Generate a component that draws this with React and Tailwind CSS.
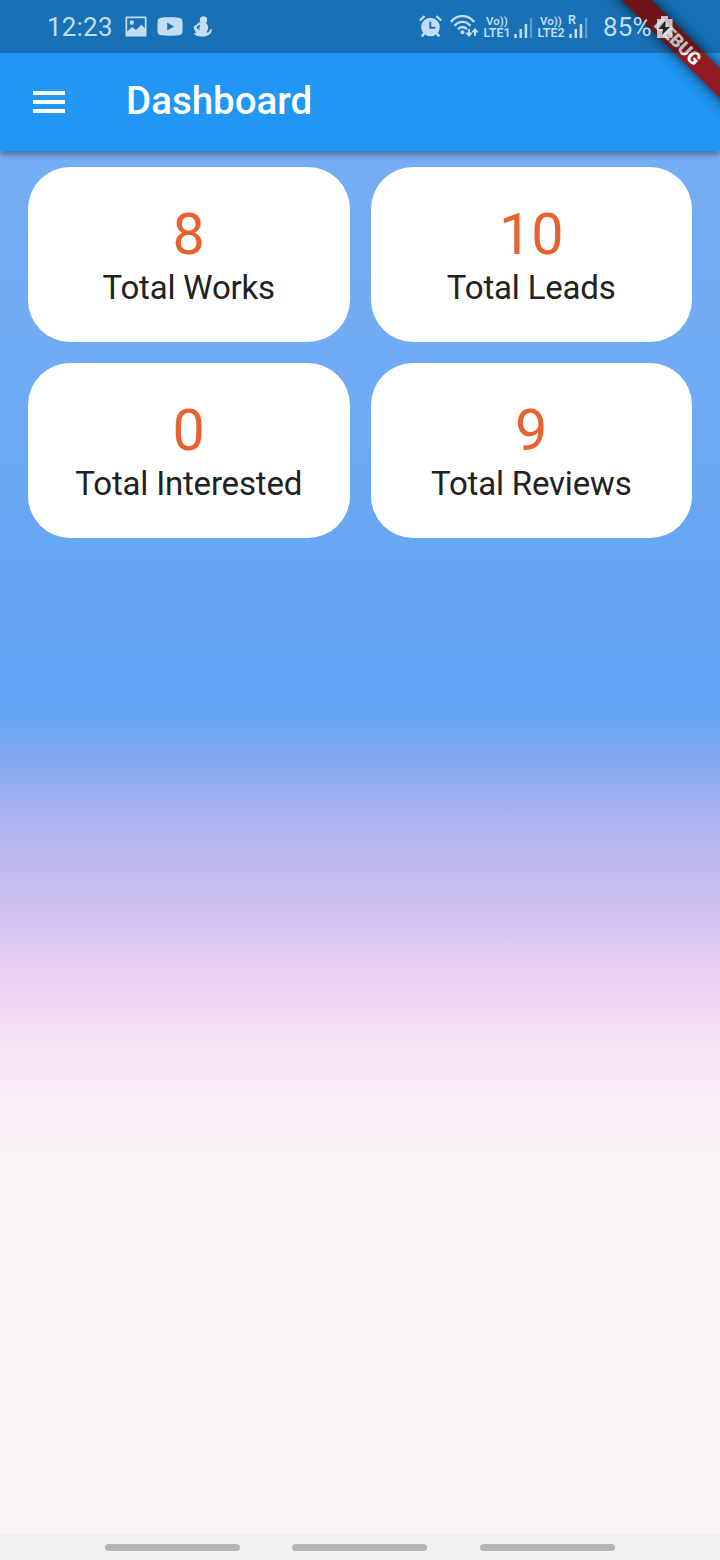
const stats = [
  { value: "8", label: "Total Works" },
  { value: "10", label: "Total Leads" },
  { value: "0", label: "Total Interested" },
  { value: "9", label: "Total Reviews" },
];

function PictureIcon() {
  return (
    <svg className="block h-[21px] w-[22px]" viewBox="0 0 22 21" fill="currentColor">
      <path fillRule="evenodd" d="M1.5 0.5h19a1 1 0 0 1 1 1v18a1 1 0 0 1-1 1h-19a1 1 0 0 1-1-1v-18a1 1 0 0 1 1-1zM2.2 2.2v13.3l4.8-4.6 4 3.2 5.5-5.3 3.3 3.4V2.2z" />
      <circle cx="6.8" cy="6.5" r="2.2" />
    </svg>
  );
}

function VideoIcon() {
  return (
    <svg className="block h-[19px] w-[26px]" viewBox="0 0 26 19" fill="currentColor">
      <path fillRule="evenodd" d="M4 .7C9 .1 17 .1 22 .7c2.2.3 3.2 1.4 3.4 3.5.3 3.5.3 7.1 0 10.6-.2 2.1-1.2 3.2-3.4 3.5-5 .6-13 .6-18 0C1.8 18 .8 16.9.6 14.8.3 11.3.3 7.7.6 4.2.8 2.1 1.800 1 4 .7zM10.200 5.500v8l6.800-4z" />
    </svg>
  );
}

function FigureIcon() {
  return (
    <svg className="block h-[21px] w-[20px]" viewBox="0 0 20 21" fill="currentColor">
      <circle cx="10.5" cy="3.9" r="3.7" />
      <path d="M7.800 6 12 6.500c3.300 2 3.600 4.500 2.800 7l-1.200 3c2 .3 3.200-1 3.900-3.500l1.500.4C18.400 17.200 16 20.500 9.500 20.500c-5 0-8.300-1.500-8.600-3l2.300-.8L.8 12.500l-.1-1.900 6-4.300.9 1.500-4.200 3.300 1.500 2.700z" />
      <path d="m6.800 9.600-1.200 2.500 1.200 2" stroke="#1c70b7" strokeWidth="1" fill="none" />
    </svg>
  );
}

function AlarmIcon() {
  return (
    <svg className="block h-[23px] w-[23px]" viewBox="0 0 23 23" fill="none" stroke="currentColor">
      <circle cx="11.5" cy="12" r="9.300" fill="currentColor" stroke="none" />
      <path d="M.9 5.500 5.600 1M17.400 1l4.700 4.500" strokeWidth="2.200" />
      <path d="m5.500 18-2.700 3.500M17.500 18l2.700 3.500" strokeWidth="2.600" />
      <path d="M11.300 6.500v6.200h5" stroke="#1c70b7" strokeWidth="2" />
    </svg>
  );
}

function WifiIcon() {
  return (
    <svg className="block h-[23px] w-[29px]" viewBox="0 0 29 23" fill="none" stroke="currentColor">
      <path d="M.8 7C7.300-.8 17.700-.8 24.200 7M4.500 10.700c4.600-5.100 11.400-5.100 16 0M8 14.200c2.500-2.900 6.500-2.900 9 0" strokeWidth="2.400" />
      <circle cx="12.5" cy="17.200" r="2" fill="currentColor" stroke="none" />
      <path d="M19 14v6.500M16.400 17.700l2.600 2.900 2.600-2.900M25 21v-6.500M22.400 17.300l2.600-2.900 2.600 2.900" strokeWidth="1.900" />
    </svg>
  );
}

function SignalIcon() {
  return (
    <svg className="block h-[20px] w-[19px]" viewBox="0 0 19 20" fill="currentColor">
      <path d="M.3 16h2.500v4H.3zM5.500 11h2.500v9H5.500zM10.700 6h2.500v14h-2.500z" />
      <path d="M16 0h2.200v20H16z" opacity=".4" />
    </svg>
  );
}

function Lte({ name }) {
  return (
    <div className="flex flex-col items-center font-semibold leading-none whitespace-nowrap">
      <span className="text-[11.5px] leading-[12px]">Vo))</span>
      <span className="text-[12.5px] leading-[12px]">{name}</span>
    </div>
  );
}

function StatusBar() {
  return (
    <div className="relative z-30 flex h-[53px] w-full bg-black/25 text-[#c3def3]">
      <div className="flex h-[53px] w-full items-center">
        <span className="ml-[47px] w-[78px] text-[26px] leading-none tracking-[0.2px] whitespace-nowrap">12:23</span>
        <PictureIcon />
        <span className="ml-[10px]"><VideoIcon /></span>
        <span className="ml-[10px]"><FigureIcon /></span>
        <span className="ml-[206px]"><AlarmIcon /></span>
        <span className="ml-[8px]"><WifiIcon /></span>
        <div className="ml-[4px] flex w-[28px] justify-center"><Lte name="LTE1" /></div>
        <span className="ml-[3px] mt-[3px]"><SignalIcon /></span>
        <div className="ml-[4px] flex w-[28px] justify-center"><Lte name="LTE2" /></div>
        <div className="relative ml-[4px] mt-[3px]">
          <SignalIcon />
          <span className="absolute -left-[1px] -top-[4px] text-[12.5px] font-semibold leading-[12px]">R</span>
        </div>
        <span className="ml-[15px] w-[53px] text-[26px] leading-none tracking-[0.2px] whitespace-nowrap">85%</span>
        <svg className="block h-[22px] w-[17px] shrink-0" viewBox="0 0 17 22">
          <path d="M5 0h7v3h4.500v19H1V3h4z" fill="#e3e6e8" fillOpacity=".8" />
          <path d="m9.500 4.500-7 8.500h4.500L6 19l8-8H9.500z" fill="#252525" />
        </svg>
      </div>
    </div>
  );
}

function DebugRibbon() {
  return (
    <div className="absolute right-0 top-0 z-20 h-[140px] w-[140px] overflow-hidden">
      <div className="absolute left-[-2px] top-[31px] flex h-[21px] w-[200px] rotate-45 items-center justify-center bg-[#921c21] text-[18px] font-black leading-none text-white shadow-[0_0_14px_rgba(0,0,0,0.75)]">
        DEBUG
      </div>
    </div>
  );
}

function StatCard({ value, label }) {
  return (
    <div className="flex h-[175px] flex-col items-center rounded-[42px] bg-white pt-[35px]">
      <span className="text-[57.5px] leading-[66px] text-[#e8622f]">{value}</span>
      <span className="text-[33px] leading-[39px] tracking-[-0.18px] text-[#212121] whitespace-nowrap">{label}</span>
    </div>
  );
}

export default function App() {
  return (
    <div className="relative flex h-[1560px] w-[720px] flex-col overflow-hidden font-[Roboto,sans-serif]">
      <header className="relative z-10 flex h-[151px] shrink-0 flex-col bg-[#2196f3] shadow-[0_3px_7px_rgba(0,0,0,0.42)]">
        <StatusBar />
        <div className="flex h-[98px] items-center">
          <button aria-label="Menu" className="ml-[33px] flex h-[22px] w-[32px] flex-col justify-between">
            <span className="h-[4px] w-full bg-white" />
            <span className="h-[4px] w-full bg-white" />
            <span className="h-[4px] w-full bg-white" />
          </button>
          <h1 className="ml-[61px] -mt-[2px] text-[38.5px] font-medium leading-none text-white">Dashboard</h1>
        </div>
        <DebugRibbon />
      </header>
      <main className="flex-1 bg-[linear-gradient(180deg,#75adf4_0px,#72abf4_180px,#5fa3f3_555px,#87a9ef_612px,#b0b4ee_676px,#cbbef0_745px,#e6cff3_815px,#f0d8f3_855px,#f6e5f5_905px,#faf0f7_965px,#f9f4f8_1000px,#f9f4f6_1383px)] px-[28px] pt-[16px]">
        <div className="grid grid-cols-2 gap-[21px]">
          {stats.map((s) => <StatCard key={s.label} {...s} />)}
        </div>
      </main>
      <nav className="flex h-[26px] shrink-0 items-center bg-[#f1f1f1] pl-[105px]">
        <span className="h-[7px] w-[135px] rounded-full bg-[#b5b5b5]" />
        <span className="ml-[52px] h-[7px] w-[135px] rounded-full bg-[#b5b5b5]" />
        <span className="ml-[53px] h-[7px] w-[135px] rounded-full bg-[#b5b5b5]" />
      </nav>
    </div>
  );
}
